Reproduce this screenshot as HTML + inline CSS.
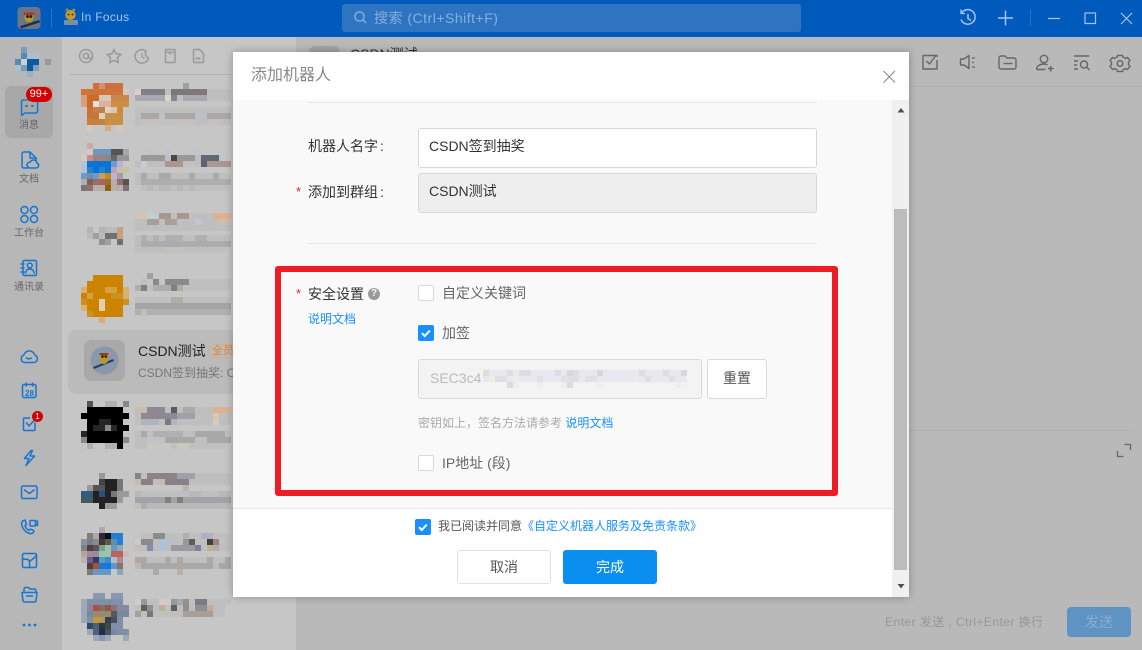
<!DOCTYPE html>
<html lang="zh">
<head>
<meta charset="utf-8">
<title>添加机器人</title>
<style>
html,body{margin:0;padding:0;width:1142px;height:650px;overflow:hidden;background:#b9b9b9}
body{position:relative;font-family:"Liberation Sans","Noto Sans CJK SC",sans-serif;font-size:14px;color:#333}
.a{position:absolute}
.t{position:absolute;white-space:nowrap;line-height:20px;height:20px}
svg{position:absolute;left:0;top:0;display:block}
.box{position:absolute;box-sizing:border-box;border:1px solid #d9d9d9;border-radius:3px}
.cb{position:absolute;box-sizing:border-box;width:16px;height:16px;border:1px solid #d9d9d9;border-radius:2px;background:#fff}
.cb.on{background:#1890ff;border-color:#1890ff}
.nav{position:absolute;left:0;width:58px;text-align:center;font-size:10px;color:#666;line-height:14px;white-space:nowrap}
</style>
</head>
<body>
<!-- background panels -->
<div class="a" style="left:0;top:37px;width:62px;height:613px;background:#b7b7b7"></div>
<div class="a" style="left:62px;top:37px;width:234px;height:613px;background:#c6c6c6"></div>
<div class="a" style="left:296px;top:37px;width:846px;height:613px;background:#b9b9b9"></div>
<div class="a" style="left:0;top:0;width:1142px;height:37px;background:#005abc"></div>
<div class="a" style="left:342px;top:4px;width:459px;height:28px;background:#2f74c1;border-radius:3px"></div>
<div class="a" style="left:5px;top:86px;width:48px;height:52px;background:#a8a8a8;border-radius:6px"></div>
<div class="a" style="left:68px;top:330px;width:200px;height:64px;background:#bbb;border-radius:8px"></div>
<div class="a" style="left:84px;top:340px;width:41px;height:41px;background:#a9a9a9;border-radius:7px"></div>
<div class="a" style="left:309px;top:46px;width:31px;height:20px;background:#a4a4a4;border-radius:6px"></div>
<div class="a" style="left:1067px;top:607px;width:64px;height:30px;background:#5e93c4;border-radius:4px"></div>

<svg width="1142" height="650" viewBox="0 0 1142 650">
<!-- separators -->
<path d="M70 74.500H231M296 86.500H1142M909 430.500H1134" stroke="#b0b0b0" fill="none"/>
<path d="M51.500 9V28" stroke="#2a72c4"/>
<path d="M1030.500 10V26" stroke="#2a72c4"/>

<!-- mosaics -->
<g fill="none" stroke-width="6" shape-rendering="crispEdges">
<!-- sidebar logo -->
<path stroke="#7a9cb8" d="M21 50h6M21 68h6"/><path stroke="#5a88b0" d="M21 56h6M15 62h6"/><path stroke="#a8c0d0" d="M27 56h6M33 56h6M15 68h6"/><path stroke="#c4d2da" d="M21 62h6"/><path stroke="#0f5a9e" d="M27 62h12M27 68h6"/><path stroke="#80a0c0" d="M33 68h6"/><path stroke="#9a9a9a" d="M45 62h6"/><path stroke="#9ab0c0" d="M27 74h6"/>

<!-- text mosaic base tone -->
<path stroke="#bfbfbf" d="M135 92h96M135 98h96M135 110h96M135 116h96M135 122h96M141 158h90M135 164h96M135 176h96M135 182h96M141 188h90M135 216h96M135 222h96M135 228h96M135 238h96M135 244h96M135 250h90M135 282h96M135 288h96M135 300h96M135 306h96M135 312h96M135 410h96M135 416h96M135 422h96M135 434h96M135 440h96M135 446h90M135 476h96M135 482h96M135 494h96M135 500h96M135 506h96M141 536h90M135 542h96M135 548h96M135 560h96M135 566h96M135 602h96M135 608h90M135 614h90"/>

<!-- avatar 1 -->
<path stroke="#cc7040" d="M93 86h6M105 86h18"/><path stroke="#d29070" d="M99 86h6"/>
<path stroke="#d0753a" d="M81 92h42"/><path stroke="#d8c8b8" d="M123 92h6"/>
<path stroke="#d5a080" d="M81 98h6M81 104h6"/><path stroke="#cc6a2a" d="M87 98h12M87 104h6"/><path stroke="#d8c8b8" d="M99 98h12M87 128h6M105 128h6M117 128h6"/><path stroke="#c8884a" d="M111 98h18"/>
<path stroke="#e0e0e0" d="M93 104h6"/><path stroke="#ddb0a0" d="M99 104h12"/><path stroke="#cc9040" d="M111 104h18"/>
<path stroke="#d07030" d="M87 110h6"/><path stroke="#c08050" d="M93 110h12"/><path stroke="#e0d0c0" d="M105 110h6M99 116h6"/><path stroke="#d8c8b8" d="M111 110h6"/><path stroke="#cc8a40" d="M117 110h6"/>
<path stroke="#c8763a" d="M87 116h12"/><path stroke="#c89050" d="M105 116h6"/><path stroke="#c89040" d="M111 116h12M105 122h18"/><path stroke="#c88040" d="M87 122h18"/><path stroke="#d0b080" d="M105 128h6"/>

<!-- avatar 2 -->
<path stroke="#cfa8a8" d="M87 146h6"/><path stroke="#d8c8c8" d="M87 152h6M81 158h6"/><path stroke="#6a9ac0" d="M93 152h18"/><path stroke="#555" d="M111 152h12"/><path stroke="#a8a8a8" d="M123 152h6"/>
<path stroke="#c09090" d="M87 158h6"/><path stroke="#a08080" d="M93 158h12"/><path stroke="#888" d="M105 158h6"/><path stroke="#666" d="M111 158h6"/><path stroke="#959595" d="M117 158h12"/>
<path stroke="#b0c4d8" d="M81 164h6M81 170h6"/><path stroke="#0a74d4" d="M87 164h24M93 170h6M105 170h6"/><path stroke="#6a9ad0" d="M111 164h6M81 176h6M93 176h6"/><path stroke="#c0b0d0" d="M117 164h6"/><path stroke="#c8c8c8" d="M123 164h6"/>
<path stroke="#2a80d0" d="M87 170h6M99 170h6"/><path stroke="#c0a0c8" d="M111 170h6"/><path stroke="#c8c0a8" d="M117 170h12"/>
<path stroke="#7090a8" d="M87 176h6"/><path stroke="#c8a050" d="M99 176h6"/><path stroke="#c08a20" d="M105 176h6"/><path stroke="#c8b0c8" d="M111 176h6"/><path stroke="#a0a0a0" d="M117 176h6"/>
<path stroke="#b0b0b0" d="M81 182h6M111 182h6"/><path stroke="#806050" d="M87 182h6"/><path stroke="#907070" d="M93 182h6M87 188h6M117 182h6"/><path stroke="#b06060" d="M99 182h6"/><path stroke="#9a7030" d="M105 182h6"/><path stroke="#555" d="M123 182h6"/>
<path stroke="#807070" d="M81 188h6M123 188h6"/><path stroke="#906010" d="M105 188h6"/><path stroke="#b8b0a8" d="M93 188h12M111 188h12"/>

<!-- avatar 3 -->
<path stroke="#b4b4b4" d="M87 230h6M99 230h6"/><path stroke="#a0a0a0" d="M93 236h6M105 242h6"/><path stroke="#707070" d="M105 236h12M117 242h6"/><path stroke="#c8a080" d="M117 230h6M117 236h6"/><path stroke="#909090" d="M99 242h6"/><path stroke="#bbb" d="M105 230h12M87 236h6M99 236h6"/>

<!-- avatar 4 -->
<path stroke="#cc8400" d="M93 278h30M87 284h36M87 290h18M117 290h6M81 296h6M93 296h18M87 302h12M105 302h18M87 308h12M105 308h18M93 314h30"/>
<path stroke="#d8b070" d="M81 290h6M123 290h6M123 296h6M81 308h6M99 320h6"/><path stroke="#d8a040" d="M105 290h12M87 296h6"/><path stroke="#e0d0b0" d="M99 302h6M99 308h6"/><path stroke="#cc9020" d="M81 302h6M123 302h6M111 296h12M87 314h6"/>

<!-- avatar 5 -->
<path stroke="#555" d="M87 404h6"/><path stroke="#b0b0b0" d="M105 404h12M87 446h6M105 446h12"/><path stroke="#888" d="M123 404h6"/>
<path stroke="#000" d="M87 410h36M81 416h48M87 422h12M111 422h12M87 428h6M117 428h12M87 434h36M87 440h36M117 446h6"/>
<path stroke="#262626" d="M99 422h12M93 428h12M111 428h6M81 434h6"/><path stroke="#888" d="M105 428h6M123 440h6M81 440h6"/>

<!-- avatar 6 -->
<path stroke="#999" d="M99 476h6"/><path stroke="#444" d="M99 482h6"/><path stroke="#222" d="M105 482h12M105 488h12M93 494h6M105 494h6M93 500h24M99 506h6"/><path stroke="#777" d="M117 482h6M117 488h6M111 494h6"/><path stroke="#555" d="M93 488h12"/><path stroke="#345a80" d="M81 494h12"/><path stroke="#2a4f80" d="M99 494h6"/><path stroke="#9a9a9a" d="M117 494h12M87 488h6M111 506h6"/><path stroke="#445a60" d="M81 500h12"/><path stroke="#999" d="M117 500h6M105 506h6"/>

<!-- avatar 7 -->
<path stroke="#b0a8b0" d="M99 530h6"/><path stroke="#8a7a7a" d="M87 536h6"/><path stroke="#a8a8b0" d="M93 536h6"/><path stroke="#302838" d="M99 536h6"/><path stroke="#101010" d="M105 536h6"/><path stroke="#2080d8" d="M111 536h12M117 542h6"/>
<path stroke="#909098" d="M81 542h6"/><path stroke="#708090" d="M87 542h6"/><path stroke="#403838" d="M99 542h6"/><path stroke="#605848" d="M105 542h6"/><path stroke="#908888" d="M93 542h6"/><path stroke="#6090a8" d="M111 542h6"/>
<path stroke="#808090" d="M81 548h6"/><path stroke="#504040" d="M87 548h6"/><path stroke="#605060" d="M93 548h6"/><path stroke="#80a080" d="M99 548h6"/><path stroke="#a0c0b0" d="M105 548h6"/><path stroke="#6898c0" d="M111 548h6"/><path stroke="#90a8b0" d="M117 548h6"/>
<path stroke="#b0a8a0" d="M81 554h6"/><path stroke="#a88890" d="M87 554h6"/><path stroke="#9090a0" d="M93 554h6"/><path stroke="#90c8b0" d="M99 554h12"/><path stroke="#c06060" d="M111 554h12"/><path stroke="#d0b8b8" d="M123 554h6"/>
<path stroke="#c0b0b0" d="M81 560h6"/><path stroke="#686090" d="M87 560h6"/><path stroke="#383860" d="M93 560h6"/><path stroke="#6098c0" d="M99 560h6"/><path stroke="#4088d0" d="M105 560h6"/><path stroke="#b0c0c8" d="M111 560h6"/><path stroke="#b08890" d="M117 560h6"/>
<path stroke="#504038" d="M87 566h6"/><path stroke="#a85038" d="M93 566h6"/><path stroke="#1878d8" d="M99 566h12"/><path stroke="#5898d0" d="M111 566h6"/><path stroke="#907068" d="M117 566h6"/>
<path stroke="#807878" d="M87 572h6"/><path stroke="#6898c8" d="M93 572h18"/><path stroke="#c0c8d0" d="M111 572h6"/><path stroke="#88a8b8" d="M117 572h6"/>

<!-- avatar 8 -->
<path stroke="#8898b0" d="M93 596h12M111 596h12"/><path stroke="#8090a8" d="M87 602h36"/><path stroke="#a0a8b8" d="M81 602h6M81 608h6M81 614h6M81 620h6"/>
<path stroke="#b05038" d="M93 608h6"/><path stroke="#807060" d="M99 608h6"/><path stroke="#905848" d="M105 608h6"/><path stroke="#907080" d="M111 608h6"/><path stroke="#8888a0" d="M87 608h6M117 608h12"/>
<path stroke="#9a8870" d="M93 614h18"/><path stroke="#505860" d="M111 614h6"/><path stroke="#7888a0" d="M117 614h12M87 614h6"/>
<path stroke="#c09838" d="M93 620h6"/><path stroke="#b09850" d="M99 620h6"/><path stroke="#304050" d="M105 620h6"/><path stroke="#485058" d="M111 620h6"/><path stroke="#8090a8" d="M117 620h6M117 626h6M117 632h12M87 620h6"/>
<path stroke="#304868" d="M87 626h6"/><path stroke="#506070" d="M93 626h6"/><path stroke="#283848" d="M99 626h6"/><path stroke="#404840" d="M105 626h6"/><path stroke="#8090a8" d="M111 626h6"/>
<path stroke="#9aa8b8" d="M87 632h6"/><path stroke="#506078" d="M93 632h6"/><path stroke="#203048" d="M99 632h6"/><path stroke="#485060" d="M105 632h6"/><path stroke="#7888a0" d="M111 632h6"/>
<path stroke="#a0a8b8" d="M93 638h6M105 638h6M123 638h6"/><path stroke="#8898b0" d="M99 638h6"/>

<!-- text mosaics -->
<path stroke="#9aa0a8" d="M183 86h6"/>
<path stroke="#d8d0c8" d="M135 92h6"/><path stroke="#808088" d="M141 92h24"/><path stroke="#807878" d="M171 92h36"/>
<path stroke="#a8a8b0" d="M135 98h30M183 98h24"/><path stroke="#dcd8c8" d="M165 98h6"/><path stroke="#808888" d="M171 98h6"/>
<path stroke="#c0c0c4" d="M135 110h6M153 110h6M213 110h12"/><path stroke="#a8a8a8" d="M141 116h18M165 116h30M207 116h24"/><path stroke="#c8c0bc" d="M141 122h24M171 122h24M207 122h12"/><path stroke="#bcc0c8" d="M159 116h6M195 116h12M165 122h6"/>
<path stroke="#c0c4cc" d="M147 152h6M165 152h6M195 152h6"/><path stroke="#9a9898" d="M141 158h24M177 158h18"/><path stroke="#4c4840" d="M171 158h6"/><path stroke="#606870" d="M201 158h18"/><path stroke="#c0c4cc" d="M219 158h12"/>
<path stroke="#c8ccd4" d="M141 164h6"/><path stroke="#a89890" d="M165 164h18M207 164h24"/><path stroke="#c8c0c0" d="M183 164h12"/><path stroke="#606070" d="M201 164h6"/>
<path stroke="#a8a8a8" d="M141 176h6M159 176h12M189 176h6M213 176h6"/><path stroke="#b0aeac" d="M141 182h90"/><path stroke="#b8b8b8" d="M147 188h6M159 188h12M177 188h6M189 188h6"/>
<path stroke="#d4c4b0" d="M135 216h12"/><path stroke="#c0d0d0" d="M147 216h12"/><path stroke="#a89890" d="M159 216h12M177 216h12"/><path stroke="#e0b090" d="M213 216h18"/>
<path stroke="#a8a098" d="M147 222h12M165 222h12"/><path stroke="#c0c8d8" d="M195 222h6"/><path stroke="#ccc0b0" d="M219 222h12"/>
<path stroke="#b0b0b0" d="M141 238h6M153 238h6M165 238h18M195 238h12"/><path stroke="#c0bcb8" d="M135 244h6"/><path stroke="#acacb0" d="M141 244h90"/><path stroke="#c4c0bc" d="M165 250h18"/>
<path stroke="#a0a0a0" d="M147 276h6"/><path stroke="#c8c4c0" d="M135 282h6M147 282h18"/><path stroke="#888" d="M153 282h6"/><path stroke="#8a8a8a" d="M165 282h24"/>
<path stroke="#b0aca8" d="M135 288h6M153 288h30"/><path stroke="#808080" d="M141 288h6M171 288h6"/>
<path stroke="#b0aca8" d="M171 300h12"/><path stroke="#a4a4a4" d="M135 306h96"/><path stroke="#b0b0b0" d="M135 312h6M147 312h84"/>
<path stroke="#c8bcb0" d="M135 410h12"/><path stroke="#8a8a90" d="M147 410h18M171 410h6"/><path stroke="#585c60" d="M171 410h6"/><path stroke="#b0a8a8" d="M183 410h12"/><path stroke="#e0b090" d="M213 410h18"/>
<path stroke="#908890" d="M141 416h36"/><path stroke="#a0a0a8" d="M177 416h18"/><path stroke="#d8c8b0" d="M213 416h6"/>
<path stroke="#b0b4c0" d="M141 422h18M171 422h6"/><path stroke="#807880" d="M165 422h6"/><path stroke="#d0ccc4" d="M213 422h6"/>
<path stroke="#a8a8a8" d="M141 434h6"/><path stroke="#b0b0b0" d="M153 434h30"/><path stroke="#a8a8a4" d="M195 434h30"/><path stroke="#c0c4c8" d="M147 440h18"/><path stroke="#a8a8a8" d="M165 440h30M207 440h24"/><path stroke="#c8c8c0" d="M147 446h24M177 446h12"/>
<path stroke="#8a8484" d="M135 476h6M147 476h30"/><path stroke="#a0a0a8" d="M177 476h18"/>
<path stroke="#c8bcb0" d="M135 482h6M159 482h6"/><path stroke="#8a8088" d="M141 482h12M165 482h24"/><path stroke="#b8b4a8" d="M183 488h6"/>
<path stroke="#b8b8b8" d="M135 494h6M189 494h12M219 494h12"/>
<path stroke="#a0a4a8" d="M135 500h30M171 500h60"/><path stroke="#808080" d="M165 500h6M177 500h6"/><path stroke="#b0aca8" d="M141 506h6"/><path stroke="#b8b8b8" d="M147 506h84"/>
<path stroke="#888f88" d="M153 536h12"/><path stroke="#b0b0b0" d="M183 536h6"/><path stroke="#b0b0c0" d="M201 536h12"/>
<path stroke="#d0c8c4" d="M135 542h6"/><path stroke="#8a8a90" d="M141 542h12"/><path stroke="#b0c0d8" d="M159 542h12"/><path stroke="#989898" d="M183 542h6"/><path stroke="#605c60" d="M189 542h6"/><path stroke="#404040" d="M207 542h6"/><path stroke="#9a8880" d="M213 542h6"/><path stroke="#c0c0c8" d="M219 542h12"/>
<path stroke="#c0c0b8" d="M141 548h6"/><path stroke="#8090a8" d="M147 548h6"/><path stroke="#b0c0d8" d="M159 548h6"/><path stroke="#9a9aa0" d="M171 548h24"/><path stroke="#808090" d="M195 548h6"/><path stroke="#bfb090" d="M207 548h6"/><path stroke="#b8a8b0" d="M213 548h6"/>
<path stroke="#b0a8a0" d="M135 560h12M165 560h6M177 560h6M207 560h6"/><path stroke="#a8a8a8" d="M225 560h6"/><path stroke="#c0b8b0" d="M135 566h6"/><path stroke="#a8a8a8" d="M141 566h72"/><path stroke="#a8a8a0" d="M219 566h12"/><path stroke="#aaa" d="M153 572h6"/><path stroke="#b8b0a8" d="M177 572h6"/>
<path stroke="#d0ccc8" d="M135 602h6M159 602h12"/><path stroke="#989898" d="M141 602h6M171 602h6"/><path stroke="#a0a8b0" d="M177 602h6"/><path stroke="#989088" d="M183 602h6"/><path stroke="#7a7a88" d="M195 602h12"/>
<path stroke="#606060" d="M141 608h6M171 608h6"/><path stroke="#c0b098" d="M159 608h6"/><path stroke="#909090" d="M147 608h6M183 608h6M195 608h12"/><path stroke="#c0ac98" d="M207 608h6"/>
<path stroke="#a8a098" d="M135 614h6M183 614h30"/><path stroke="#777" d="M147 614h6"/>
</g>

<!-- title bar avatar -->
<rect x="17.500" y="7" width="23" height="22" rx="4" fill="#6a7686"/>
<rect x="20" y="23" width="20" height="2.500" fill="#1c2f50" transform="rotate(-18 30 24)"/>
<ellipse cx="29" cy="17.500" rx="4.600" ry="5" fill="#b8962a"/><rect x="24" y="12.500" width="10" height="2.500" fill="#a83a20"/><circle cx="27.500" cy="16.500" r="1.500" fill="#222"/><circle cx="30.800" cy="16.500" r="1.500" fill="#222"/>
<path d="M34 12l6-1M34 14l6 0" stroke="#b06060" stroke-width="1"/>
<!-- in focus icon -->
<ellipse cx="70.500" cy="15" rx="5.200" ry="5" fill="#c99c26"/><path d="M66 11l1-2 2 2M75 11l-1-2-2 2" stroke="#c99c26" fill="none"/><circle cx="68.500" cy="14.500" r="1" fill="#334"/><circle cx="72.500" cy="14.500" r="1" fill="#334"/><rect x="64" y="20" width="14" height="5" rx="1" fill="#7b8ea8"/>

<!-- search icon -->
<circle cx="359.500" cy="16.500" r="4.600" fill="none" stroke="#88aedc" stroke-width="1.400"/><path d="M363 20l3 3" stroke="#88aedc" stroke-width="1.400"/>

<!-- title bar actions -->
<g fill="none" stroke="#a6c5ea" stroke-width="1.500">
<path d="M962 12.500a7.300 7.300 0 1 1-1 7"/><path d="M961 9.500v4h4" stroke-width="1.300"/><path d="M968 14v4.500l3 2"/>
<path d="M998 18h15M1005.500 10.500v15"/>
<path d="M1048 18.500h12" stroke-width="1.200"/>
<rect x="1085" y="13" width="10.500" height="10.500" stroke-width="1.200"/>
<path d="M1121 13l11 11M1132 13l-11 11" stroke-width="1.200"/>
</g>

<!-- list tabs -->
<g fill="none" stroke="#999" stroke-width="1.500">
<circle cx="86" cy="56" r="6.500"/><circle cx="86" cy="56" r="2.600"/><path d="M88.600 54v3.500c0 1.500 3.900 1.500 3.900-1.500"/>
<path d="M114 49.500l2.100 4.300 4.700.7-3.400 3.300.8 4.700-4.200-2.200-4.200 2.200.8-4.700-3.400-3.300 4.700-.7z"/>
<path d="M142 49.500a6.800 6.800 0 1 0 6.500 8.500 5 5 0 0 1-2.500-7z"/><path d="M142 53v4l2.500 1.500" stroke-width="1.200"/>
<rect x="165.500" y="49.500" width="9.500" height="13" rx=".8"/><path d="M165.500 52h9.500M168 52l2.200 2 2.200-2" stroke-width="1.100"/>
<path d="M193.500 50.500a1 1 0 0 1 1-1h5l4 4v8a1 1 0 0 1-1 1h-8a1 1 0 0 1-1-1z"/><path d="M195.500 58.500h5" stroke-width="2"/>
</g>

<!-- selected chat avatar -->
<circle cx="104.500" cy="360.500" r="14" fill="#8898ae"/>
<path d="M94 369l20-8-1-2-20 8z" fill="#2c3f60"/>
<ellipse cx="104" cy="358" rx="4.500" ry="6" fill="#b8982c"/><rect x="99.500" y="353" width="9" height="2" fill="#9a3a25"/><circle cx="102.500" cy="356.500" r="1.400" fill="#222"/><circle cx="105.800" cy="356.500" r="1.400" fill="#222"/>
<path d="M108 353l8-2M108 355l8 0" stroke="#b58a8a"/>

<!-- sidebar icons -->
<g fill="none" stroke="#1775d0" stroke-width="1.500" stroke-linejoin="round" stroke-linecap="round">
<path d="M22.500 100h13.500a1.500 1.500 0 0 1 1.500 1.500v10a1.500 1.500 0 0 1-1.500 1.500h-11l-3.500 2.500v-14a1.500 1.500 0 0 1 1-1.500z"/>
<path d="M26 106h.8M32 106h.8" stroke-width="2"/>
<path d="M28 168h-4a2 2 0 0 1-2-2v-12a2 2 0 0 1 2-2h6l6 6v3"/><path d="M30 152v6h6"/><path d="M30 168a3 3 0 0 1 .2-6 3.600 3.600 0 0 1 6.800 1 2.600 2.600 0 0 1-1 5z"/>
<rect x="21" y="206.500" width="7" height="7" rx="3.500"/><rect x="30.500" y="206.500" width="7" height="7" rx="3.500"/><rect x="21" y="215.500" width="7" height="7" rx="3.500"/><rect x="30.500" y="215.500" width="7" height="7" rx="3.500"/>
<rect x="23" y="260.500" width="13.500" height="15" rx="1.500"/><path d="M21 264h3M21 268h3M21 272h3"/><circle cx="29.800" cy="265.500" r="2.400"/><path d="M25.500 273c.5-3 2.500-4 4.300-4s3.800 1 4.300 4"/>
<path d="M24.500 362.500a3.800 3.800 0 0 1-.8-7.300 5.800 5.800 0 0 1 11.200 0 3.800 3.800 0 0 1-.8 7.300z"/><path d="M26.500 358c1.500 1 3.500 1 5 0"/>
<rect x="22.500" y="384.500" width="13.500" height="13" rx="1.500"/><path d="M26 383v3M32.500 383v3"/>
<path d="M35 423v6.500a1 1 0 0 1-1 1h-9.500a1 1 0 0 1-1-1v-10.500a1 1 0 0 1 1-1h5"/><path d="M26.500 423l2.500 3 5.500-6"/>
<path d="M31 450.500l-6.500 8h4.500l-3 7 8.500-9.500h-4.500l2.500-5.500z"/>
<rect x="21.500" y="486" width="15.500" height="12.500" rx="1.500"/><path d="M24.500 490l4.800 3.500 4.800-3.500"/>
<path d="M25 520c-3 .5-4 3-3 6 1.500 4 4.500 7 8 7.500 2 .3 3.500-.5 4-2.500l-3.500-2-1.500 1.500c-2-1-3.500-3-4-5l1.500-1.200z"/><rect x="30" y="520.500" width="5.500" height="5.500" rx=".8"/><path d="M35.500 522l2-1v4.500l-2-1"/>
<rect x="22.500" y="553.500" width="14" height="14" rx="1.500"/><path d="M22.500 559c3 0 7 0 7 2.500v6M36.500 555.500c-2 2-4 4-7 6"/>
<path d="M24 592v-3a1.500 1.500 0 0 1 1.500-1.500h3l1.500 1.500h4.500a1.500 1.500 0 0 1 1.500 1.500v1.500"/><path d="M22 592.500h15l-1 8a1.500 1.500 0 0 1-1.500 1.500h-10a1.500 1.500 0 0 1-1.500-1.500z"/><path d="M26.500 596h6"/>
</g>
<circle cx="24" cy="625" r="1.400" fill="#1775d0"/><circle cx="29.500" cy="625" r="1.400" fill="#1775d0"/><circle cx="35" cy="625" r="1.400" fill="#1775d0"/>

<!-- right toolbar -->
<g fill="none" stroke="#666" stroke-width="1.400" stroke-linejoin="round">
<path d="M937 57v-1.500h-14v13.500h14v-9"/><path d="M926.500 61l3 3 6-8"/>
<path d="M960.500 59h3.500l5-3.500v13l-5-3.500h-3.500z"/><path d="M972 58h3M972 62.500h2M972 67h3" stroke-width="1.200"/>
<path d="M999 58a2 2 0 0 1 2-2h4l2 2h7a2 2 0 0 1 2 2v7a2 2 0 0 1-2 2h-13a2 2 0 0 1-2-2z"/><path d="M1003.500 63.500h9"/>
<circle cx="1044" cy="59" r="3.700"/><path d="M1036.500 69.500c0-3.500 3.500-5.500 7.500-5.500 1.500 0 2.500.3 3.500.8M1036.500 69.500h9"/><path d="M1048 68.500h5.500M1050.700 66v5.500"/>
<path d="M1074 56h15M1074 61h4M1074 65h3M1074 69h4"/><circle cx="1084" cy="64.500" r="3.500"/><path d="M1086.500 67l3 3"/>
<path d="M1117.500 55.500h5l.8 2 2.200.9 2-.9 2.500 3-1.500 1.700v2.500l1.500 1.600-2.500 3.200-2-1-2.200 1-.8 2h-5l-.8-2-2.200-1-2 1-2.500-3.200 1.500-1.600v-2.500l-1.500-1.700 2.500-3 2 .9 2.200-.9z"/><circle cx="1120" cy="63.500" r="2.800"/>
</g>
<path d="M1124.500 444.500h6v5.500M1117.500 451v5.500h6" fill="none" stroke="#666" stroke-width="1.300"/>
</svg>

<!-- background text -->
<div class="t" style="left:81px;top:7px;font-size:12px;color:#a6c5ea;letter-spacing:.3px">In Focus</div>
<div class="t" style="left:374px;top:8px;font-size:14px;color:#88aedc;letter-spacing:.5px">搜索 (Ctrl+Shift+F)</div>
<div class="nav" style="top:119px">消息</div>
<div class="nav" style="top:173px">文档</div>
<div class="nav" style="top:227px">工作台</div>
<div class="nav" style="top:281px">通讯录</div>
<div class="a" style="left:26px;top:87px;width:26px;height:15px;background:#d40000;border-radius:8px;color:#fff;font-size:11px;line-height:15px;text-align:center">99+</div>
<div class="a" style="left:22px;top:389px;width:15px;text-align:center;font-size:8px;font-weight:bold;line-height:10px;color:#1775d0">28</div>
<div class="a" style="left:32px;top:411px;width:11px;height:11px;background:#d40000;border-radius:50%;color:#fff;font-size:8px;line-height:11px;text-align:center">1</div>
<div class="t" style="left:138px;top:341px;font-size:14px;color:#222">CSDN测试</div>
<div class="a" style="left:208px;top:344px;width:30px;height:12px;border:1px solid #d8ae80;border-radius:7px;color:#e0842e;font-size:11px;line-height:12px;padding-left:3px;box-sizing:content-box">全员</div>
<div class="t" style="left:138px;top:363px;font-size:12px;color:#777">CSDN签到抽奖: CSDN</div>
<div class="t" style="left:350px;top:44px;font-size:14px;color:#333">CSDN测试</div>
<div class="t" style="left:885px;top:612px;font-size:12px;color:#979797;letter-spacing:.45px">Enter 发送 , Ctrl+Enter 换行</div>
<div class="a" style="left:1067px;top:607px;width:64px;line-height:30px;text-align:center;font-size:14px;color:#8aafd4">发送</div>

<!-- dialog -->
<div class="a" style="left:233px;top:52px;width:676px;height:545px;background:#fff;box-shadow:0 0 8px rgba(0,0,0,.28);overflow:hidden">
  <div class="a" style="left:0;top:48px;width:659px;height:408px;background:#f9f9f9"></div>
  <div class="a" style="left:0;top:456px;width:659px;height:1px;background:#e6e6e6"></div>
  <div class="a" style="left:659px;top:48px;width:17px;height:497px;background:#f0f0f0"></div>
  <div class="a" style="left:661px;top:157px;width:13px;height:361px;background:#bcbcbc"></div>
  <svg width="676" height="545" viewBox="0 0 676 545">
    <path d="M664.500 60.500l3.500-4.500 3.500 4.500zM664.500 532l3.500 4.500 3.500-4.500z" fill="#505050"/>
    <path d="M650.500 19l11.500 11.500M662 19l-11.500 11.500" stroke="#8a8a8a" stroke-width="1.100" fill="none"/>
  </svg>
</div>

<div class="t" style="left:251px;top:66px;font-size:16px;color:#888">添加机器人</div>
<div class="a" style="left:308px;top:102px;width:509px;height:1px;background:#e6e6e6"></div>
<div class="a" style="left:308px;top:243px;width:509px;height:1px;background:#e6e6e6"></div>

<div class="t" style="left:308px;top:136px">机器人名字<span style="margin-left:2px">:</span></div>
<div class="t" style="left:296px;top:182px;color:#ee1c25;font-size:13px">*</div>
<div class="t" style="left:308px;top:182px">添加到群组<span style="margin-left:2px">:</span></div>
<div class="box" style="left:418px;top:128px;width:399px;height:40px;background:#fff"></div>
<div class="t" style="left:429px;top:136px">CSDN签到抽奖</div>
<div class="box" style="left:418px;top:173px;width:399px;height:40px;background:#eee"></div>
<div class="t" style="left:429px;top:181px">CSDN测试</div>

<!-- red highlight -->
<div class="a" style="left:275px;top:266px;width:563px;height:230px;box-sizing:border-box;border:6px solid #ee1c25;border-radius:3px"></div>

<div class="t" style="left:296px;top:284px;color:#ee1c25;font-size:13px">*</div>
<div class="t" style="left:308px;top:284px;color:#333">安全设置</div>
<div class="a" style="left:368px;top:288px;width:12px;height:12px;border-radius:50%;background:#999;color:#f9f9f9;font-size:10px;font-weight:bold;line-height:12px;text-align:center">?</div>
<div class="t" style="left:308px;top:309px;font-size:12px;color:#1890ff">说明文档</div>

<div class="cb" style="left:418px;top:285px"></div>
<div class="t" style="left:442px;top:283px;color:#666">自定义关键词</div>
<div class="cb on" style="left:418px;top:325px"><svg width="14" height="14" viewBox="0 0 14 14"><path d="M3 7.200l2.800 2.800 5-5.500" fill="none" stroke="#fff" stroke-width="2"/></svg></div>
<div class="t" style="left:442px;top:323px;color:#666">加签</div>

<div class="box" style="left:418px;top:359px;width:284px;height:40px;background:#f3f3f3"></div>
<div class="t" style="left:430px;top:368px;color:#bbb">SEC3c4</div>
<svg width="1142" height="650" viewBox="0 0 1142 650" style="pointer-events:none">
<g fill="none" stroke-width="6" shape-rendering="crispEdges">
<path stroke="#e8e8ee" d="M483 373h204M483 379h204"/>
<path stroke="#eceef0" d="M507 385h12M537 385h6M561 385h12M597 385h6M675 385h6"/>
<path stroke="#dededf" d="M483 373h6M507 373h6M519 373h6M573 373h6M639 373h6M663 373h6"/>
<path stroke="#dcdce6" d="M525 373h6M555 373h6"/>
<path stroke="#d8d8da" d="M567 373h6M597 373h6M681 373h6"/>
<path stroke="#dde1e4" d="M495 379h12M537 379h6M561 379h18M585 379h12"/>
<path stroke="#f0ece4" d="M489 379h6M513 379h6M633 379h6"/>
<path stroke="#e2dfe2" d="M669 379h6M645 379h6"/>
<path stroke="#dcdce0" d="M507 385h6M567 385h6"/>
</g>
</svg>
<div class="box" style="left:707px;top:359px;width:60px;height:40px;background:#fff"></div>
<div class="t" style="left:723px;top:368px;color:#555">重置</div>
<div class="t" style="left:418px;top:413px;font-size:12px;color:#aaa">密钥如上，签名方法请参考 <span style="color:#1890ff">说明文档</span></div>
<div class="cb" style="left:418px;top:455px"></div>
<div class="t" style="left:442px;top:453px;color:#666">IP地址 (段)</div>

<!-- footer -->
<div class="cb on" style="left:415px;top:519px"><svg width="14" height="14" viewBox="0 0 14 14"><path d="M3 7.200l2.800 2.800 5-5.500" fill="none" stroke="#fff" stroke-width="2"/></svg></div>
<div class="t" style="left:438px;top:516px;font-size:12px;color:#555">我已阅读并同意<span style="color:#1890ff">《自定义机器人服务及免责条款》</span></div>
<div class="box" style="left:457px;top:550px;width:94px;height:34px;background:#fff;border-color:#e2e2e2;text-align:center;line-height:32px;color:#555">取消</div>
<div class="a" style="left:563px;top:550px;width:94px;height:34px;background:#0a8ff0;border-radius:3px;text-align:center;line-height:34px;color:#fff">完成</div>
</body>
</html>
